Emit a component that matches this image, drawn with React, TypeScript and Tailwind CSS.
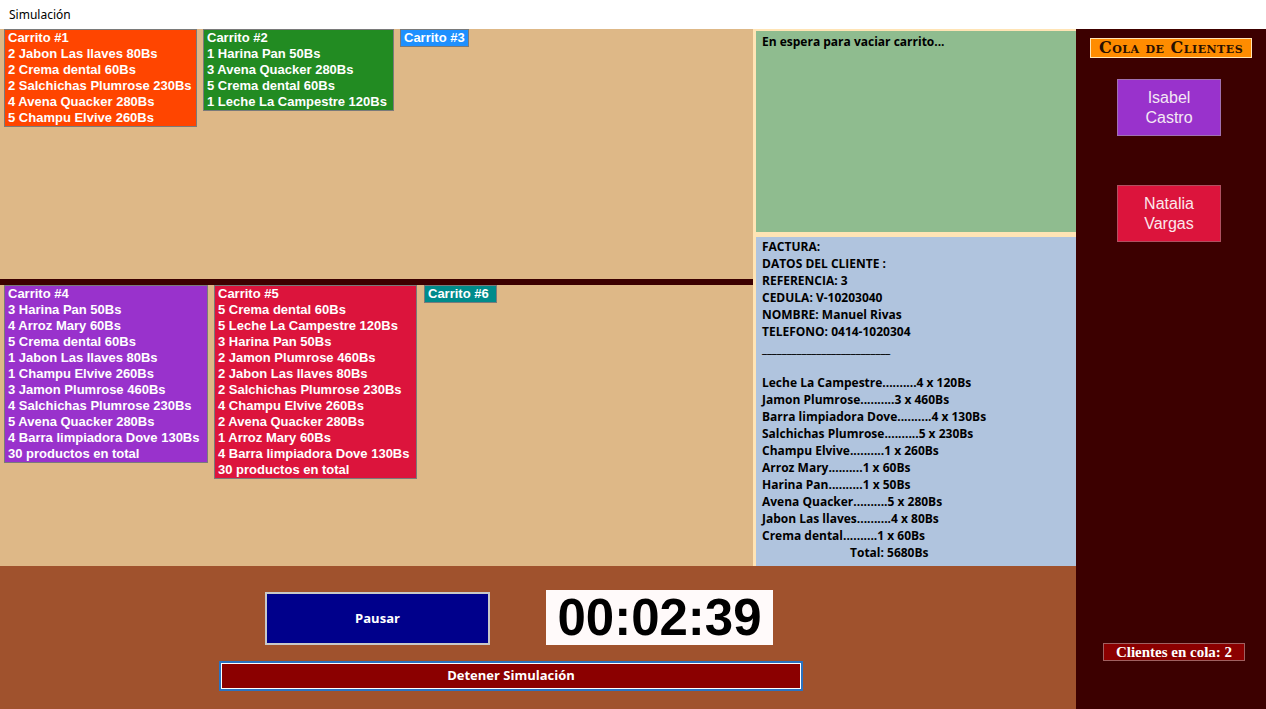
import React from 'react';

interface Cart {
  title: string;
  lines: string[];
  color: string;
  width: string;
}

const topCarts: Cart[] = [
  {
    title: 'Carrito #1',
    color: 'bg-[#ff4500]',
    width: 'w-[193px]',
    lines: [
      '2 Jabon Las llaves 80Bs',
      '2 Crema dental 60Bs',
      '2 Salchichas Plumrose 230Bs',
      '4 Avena Quacker 280Bs',
      '5 Champu Elvive 260Bs',
    ],
  },
  {
    title: 'Carrito #2',
    color: 'bg-[#228b22]',
    width: 'w-[191px]',
    lines: ['1 Harina Pan 50Bs', '3 Avena Quacker 280Bs', '5 Crema dental 60Bs', '1 Leche La Campestre 120Bs'],
  },
  { title: 'Carrito #3', color: 'bg-[#1e90ff]', width: 'w-[69px]', lines: [] },
];

const bottomCarts: Cart[] = [
  {
    title: 'Carrito #4',
    color: 'bg-[#9932cc]',
    width: 'w-[204px]',
    lines: [
      '3 Harina Pan 50Bs',
      '4 Arroz Mary 60Bs',
      '5 Crema dental 60Bs',
      '1 Jabon Las llaves 80Bs',
      '1 Champu Elvive 260Bs',
      '3 Jamon Plumrose 460Bs',
      '4 Salchichas Plumrose 230Bs',
      '5 Avena Quacker 280Bs',
      '4 Barra limpiadora Dove 130Bs',
      '30 productos en total',
    ],
  },
  {
    title: 'Carrito #5',
    color: 'bg-[#dc143c]',
    width: 'w-[203px]',
    lines: [
      '5 Crema dental 60Bs',
      '5 Leche La Campestre 120Bs',
      '3 Harina Pan 50Bs',
      '2 Jamon Plumrose 460Bs',
      '2 Jabon Las llaves 80Bs',
      '2 Salchichas Plumrose 230Bs',
      '4 Champu Elvive 260Bs',
      '2 Avena Quacker 280Bs',
      '1 Arroz Mary 60Bs',
      '4 Barra limpiadora Dove 130Bs',
      '30 productos en total',
    ],
  },
  { title: 'Carrito #6', color: 'bg-[#008b8b]', width: 'w-[73px]', lines: [] },
];

const facturaItems = [
  'Leche La Campestre..........4 x 120Bs',
  'Jamon Plumrose..........3 x 460Bs',
  'Barra limpiadora Dove..........4 x 130Bs',
  'Salchichas Plumrose..........5 x 230Bs',
  'Champu Elvive..........1 x 260Bs',
  'Arroz Mary..........1 x 60Bs',
  'Harina Pan..........1 x 50Bs',
  'Avena Quacker..........5 x 280Bs',
  'Jabon Las llaves..........4 x 80Bs',
  'Crema dental..........1 x 60Bs',
];

const CartBox = ({ cart }: { cart: Cart }) => (
  <div
    className={`${cart.color} ${cart.width} border border-[#7a7a7a] px-[3px] text-[13px] font-bold leading-[16px] text-white`}
  >
    <div>{cart.title}</div>
    {cart.lines.map((l, i) => (
      <div key={i} className="whitespace-pre">
        {l}
      </div>
    ))}
  </div>
);

export default function App() {
  return (
    <div className="flex h-[709px] w-[1266px] flex-col overflow-hidden font-['Liberation_Sans',sans-serif]">
      {/* window caption */}
      <div className="flex h-[29px] items-center bg-white pl-[9px] font-['Noto_Sans',sans-serif] text-[12px] text-black">
        Simulación
      </div>

      <div className="flex flex-1">
        <div className="flex w-[1076px] flex-col">
          <div className="flex h-[537px]">
            {/* carts */}
            <div className="flex w-[753px] flex-col bg-[#deb887]">
              <div className="flex h-[250px] items-start gap-[6px] pl-[4px]">
                {topCarts.map((c) => (
                  <CartBox key={c.title} cart={c} />
                ))}
              </div>
              <div className="h-[6px] bg-[#3c0000]" />
              <div className="flex flex-1 items-start pl-[4px]">
                <CartBox cart={bottomCarts[0]} />
                <div className="ml-[6px]">
                  <CartBox cart={bottomCarts[1]} />
                </div>
                <div className="ml-[7px]">
                  <CartBox cart={bottomCarts[2]} />
                </div>
              </div>
            </div>

            {/* checkout column */}
            <div className="flex w-[323px] flex-col gap-[5px] overflow-hidden bg-[#ffe4b5] pl-[3px] pt-[2px]">
              <div className="h-[201px] shrink-0 bg-[#8fbc8f] px-[6px] pt-[2px] font-['Open_Sans',sans-serif] text-[12px] font-bold text-black">
                En espera para vaciar carrito...
              </div>
              <div className="min-h-0 flex-1 bg-[#b0c4de] px-[6px] pt-[1px] font-['Open_Sans',sans-serif] text-[12px] font-bold leading-[17px] text-black">
                <div>FACTURA:</div>
                <div>DATOS DEL CLIENTE :</div>
                <div>REFERENCIA: 3</div>
                <div>CEDULA: V-10203040</div>
                <div>NOMBRE: Manuel Rivas</div>
                <div>TELEFONO: 0414-1020304</div>
                <div>__________________________</div>
                <div className="h-[17px]" />
                {facturaItems.map((t) => (
                  <div key={t}>{t}</div>
                ))}
                <div className="pl-[88px]">Total: 5680Bs</div>
              </div>
            </div>
          </div>

          {/* controls */}
          <div className="flex flex-1 flex-col bg-[#a0522d]">
            <div className="flex items-start pt-[24px]">
              <button className="ml-[265px] mt-[2px] h-[53px] w-[225px] border-2 border-[#c8c8c8] bg-[#00008b] font-['Open_Sans',sans-serif] text-[13px] font-bold text-white">
                Pausar
              </button>
              <div className="ml-[56px] flex h-[55px] w-[227px] items-center justify-center bg-[#fffafa] text-[51px] font-bold leading-none text-black">
                00:02:39
              </div>
            </div>
            <div className="ml-[219px] mt-[16px] w-[584px] border-2 border-[#2a72c0]">
              <button className="h-[26px] w-full border border-white bg-[#8b0000] font-['Open_Sans',sans-serif] text-[13px] font-bold text-white">
                Detener Simulación
              </button>
            </div>
          </div>
        </div>

        {/* client queue */}
        <div className="flex w-[190px] flex-col items-center bg-[#3c0000]">
          <div className="mt-[9px] flex h-[20px] w-[162px] items-center justify-center border border-[#ffe4b5] bg-[#ff8c00] font-['DejaVu_Serif',serif] text-[16px] font-bold tracking-[0.5px] text-[#2a1000] [font-variant:small-caps]">
            Cola de Clientes
          </div>
          <div className="mr-[4px] mt-[21px] flex h-[57px] w-[104px] items-center justify-center border border-[#a070b0] bg-[#9932cc] text-center text-[16px] leading-[20px] text-[#f4e8f4]">
            Isabel
            <br />
            Castro
          </div>
          <div className="mr-[4px] mt-[49px] flex h-[57px] w-[104px] items-center justify-center border border-[#b05060] bg-[#dc143c] text-center text-[16px] leading-[20px] text-[#fbe8ec]">
            Natalia
            <br />
            Vargas
          </div>
          <div className="ml-[6px] mt-[401px] flex h-[18px] w-[142px] items-center justify-center border border-[#a06060] bg-[#8b0000] font-['Liberation_Serif',serif] text-[15px] font-bold text-white">
            Clientes en cola: 2
          </div>
        </div>
      </div>
    </div>
  );
}
